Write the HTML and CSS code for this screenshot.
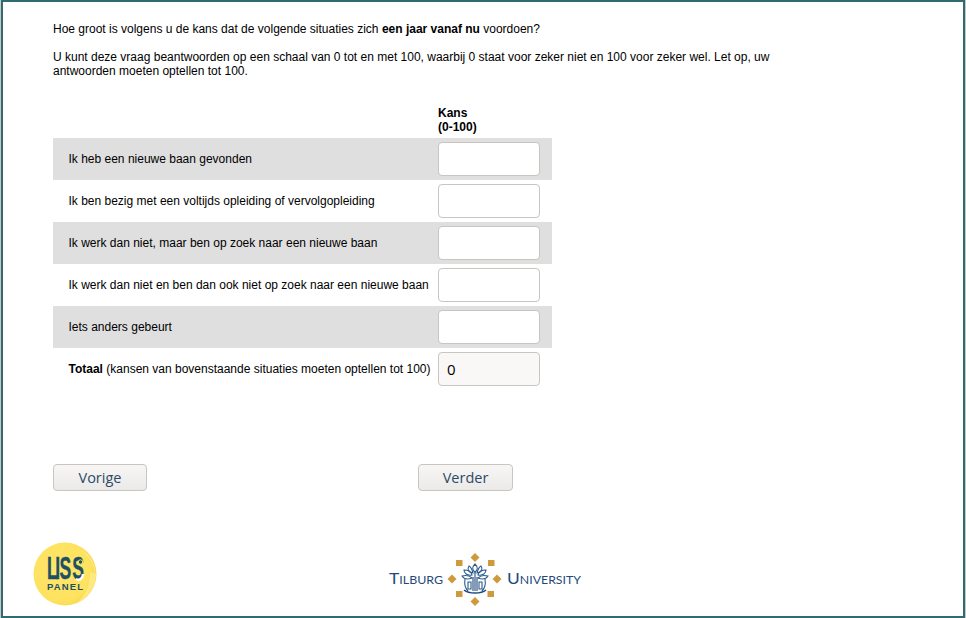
FILE: index.html
```html
<!DOCTYPE html>
<html lang="nl">
<head>
<meta charset="utf-8">
<title>Kans</title>
<link rel="stylesheet" href="styles.css">
</head>
<body>
<div class="frame">
  <main class="content">
    <p class="question">Hoe groot is volgens u de kans dat de volgende situaties zich <b>een jaar vanaf nu</b> voordoen?</p>
    <p class="question intro">U kunt deze vraag beantwoorden op een schaal van 0 tot en met 100, waarbij 0 staat voor zeker niet en 100 voor zeker wel. Let op, uw antwoorden moeten optellen tot 100.</p>
    <div class="grid">
      <div class="head"><b>Kans<br>(0-100)</b></div>
      <div class="row shaded"><span class="label">Ik heb een nieuwe baan gevonden</span><input class="field" type="text"></div>
      <div class="row"><span class="label">Ik ben bezig met een voltijds opleiding of vervolgopleiding</span><input class="field" type="text"></div>
      <div class="row shaded"><span class="label">Ik werk dan niet, maar ben op zoek naar een nieuwe baan</span><input class="field" type="text"></div>
      <div class="row"><span class="label">Ik werk dan niet en ben dan ook niet op zoek naar een nieuwe baan</span><input class="field" type="text"></div>
      <div class="row shaded"><span class="label">Iets anders gebeurt</span><input class="field" type="text"></div>
      <div class="row"><span class="label"><b>Totaal</b> (kansen van bovenstaande situaties moeten optellen tot 100)</span><input class="field total" type="text" value="0" readonly></div>
    </div>
    <div class="nav">
      <button class="btn" type="button">Vorige</button>
      <button class="btn" type="button">Verder</button>
    </div>
  </main>
  <footer class="logos">
    <svg class="liss" width="64" height="64" viewBox="0 0 64 64" role="img" aria-label="LISS Panel">
      <defs>
        <radialGradient id="ball" cx="0.42" cy="0.45" r="0.6">
          <stop offset="0" stop-color="#ffe56c"/>
          <stop offset="0.8" stop-color="#fee25f"/>
          <stop offset="1" stop-color="#f8d84e"/>
        </radialGradient>
      </defs>
      <circle cx="32" cy="32" r="31.500" fill="url(#ball)"/>
      <path d="M46 7 A31 31 0 0 1 62 36 A28 28 0 0 0 46 7Z" fill="#fff3b0"/>
      <path d="M63 32 A31 31 0 0 1 44 61 A40 40 0 0 0 57 30Z" fill="#ffec8e" opacity=".75"/>
      <text class="liss-word" transform="scale(.55 1)" x="25.500 40.500 48 71.500" y="37.500">LISS</text>
      <path d="M43 37c4 2 7-1 7-5" fill="none" stroke="#fff" stroke-width="2.500"/>
      <circle cx="47.500" cy="20" r="2.200" fill="#1d5062" stroke="#fee25f"/>
      <text class="liss-panel" x="14" y="48" textLength="36">PANEL</text>
    </svg>
    <svg class="tilburg" width="194" height="54" viewBox="0 0 194 54" role="img" aria-label="Tilburg University">
      <text class="tu" x="0" y="30.500" textLength="54" lengthAdjust="spacingAndGlyphs"><tspan class="tu-big">T</tspan>ILBURG</text>
      <text class="tu" x="118" y="30.500" textLength="74" lengthAdjust="spacingAndGlyphs"><tspan class="tu-big">U</tspan>NIVERSITY</text>
      <g fill="#cf9a3b">
        <path d="M86 0l4.500 4.500-4.500 4.500-4.500-4.500z"/>
        <path d="M86 44l4.500 4.500-4.500 4.500-4.500-4.500z"/>
        <path d="M63 21.500l4.500 4.500-4.500 4.500-4.500-4.500z"/>
        <path d="M108 21.500l4.500 4.500-4.500 4.500-4.500-4.500z"/>
        <rect x="67" y="7" width="6.500" height="6"/>
        <rect x="99" y="7" width="6.500" height="6"/>
        <rect x="67" y="38" width="6.500" height="6"/>
        <rect x="98.500" y="38" width="6.500" height="6"/>
      </g>
      <g fill="none" stroke="#2a5a8c" stroke-width="1.100">
        <path d="M86 38V18M84 38V24M88 38V24" stroke="#1f4a7c"/>
        <path d="M86 11c-3 3-3 6 0 8 3-2 3-5 0-8z"/>
        <path d="M80 13c-2 3-1 6 4 7-1-4-2-6-4-7zM92 13c2 3 1 6-4 7 1-4 2-6 4-7z"/>
        <path d="M75 17c0 3 3 6 8 5-1-4-4-5-8-5zM97 17c0 3-3 6-8 5 1-4 4-5 8-5z"/>
        <path d="M73 23c2 3 5 4 10 2-3-3-6-3-10-2zM99 23c-2 3-5 4-10 2 3-3 6-3 10-2z"/>
        <path d="M76 26c-1 6 1 10 3 12M96 26c1 6-1 10-3 12"/>
        <path d="M75 37c5 4 17 4 22 0" stroke-width="1.600" stroke="#1f4a7c"/>
        <path d="M79 29h3v7h-3zM90 29h3v7h-3z"/>
      </g>
    </svg>
  </footer>
</div>
</body>
</html>
```
FILE: styles.css
```css
* { box-sizing: border-box; }
html, body { margin: 0; padding: 0; background: #c8c8c8; }
body { width: 966px; height: 618px; overflow: hidden; }
.frame {
  width: 964px;
  height: 618px;
  margin-left: 1px;
  background: #fff;
  border: 2px solid #2f6b70;
  display: flex;
  flex-direction: column;
}
.content { padding: 20px 0 0 50px; flex: 1; color: #000; font: 12px/14px "Liberation Sans", Arial, sans-serif; }
.question { margin: 0 0 14px; width: 730px; }
.intro { margin-bottom: 0; }
.grid { width: 499px; margin-top: 28px; }
.head { margin-left: 385px; height: 32px; line-height: 14px; }
.row { display: flex; align-items: center; height: 42px; }
.row.shaded { background: #dfdfdf; }
.label { width: 385px; padding-left: 15.500px; white-space: nowrap; }
.field {
  display: block;
  width: 102px;
  height: 34px;
  padding: 2px 8px;
  background: #fff;
  border: 1px solid #c9c5bf;
  border-radius: 4px;
  font: 15px "Open Sans", sans-serif;
  color: #000;
  outline: none;
}
.field.total { background: #f9f8f6; }
.nav { display: flex; margin-top: 74px; gap: 271px; }
.btn {
  width: 94px;
  height: 27px;
  padding: 0;
  border: 1px solid #c9c5bf;
  border-radius: 4px;
  background: linear-gradient(#f7f6f5, #ebeae8);
  font: 14.500px "Open Sans", sans-serif;
  color: #2c4a66;
}
.btn + .btn { width: 95px; }
.logos { height: 74px; padding-left: 30px; display: flex; align-items: flex-start; }
.liss { display: block; flex: none; }
.tilburg { display: block; margin: 11px 0 0 292px; flex: none; }
.liss-word { font: bold 32px "Liberation Sans Narrow", "Liberation Sans", sans-serif; fill: #1d5062; stroke: #1d5062; stroke-width: .4px; }
.liss-panel { font: bold 9.500px "Liberation Sans", sans-serif; fill: #1d5062; }
.tu { font: 11px "Lato", sans-serif; fill: #1f4a7c; }
.tu-big { font-size: 15.500px; }
```
